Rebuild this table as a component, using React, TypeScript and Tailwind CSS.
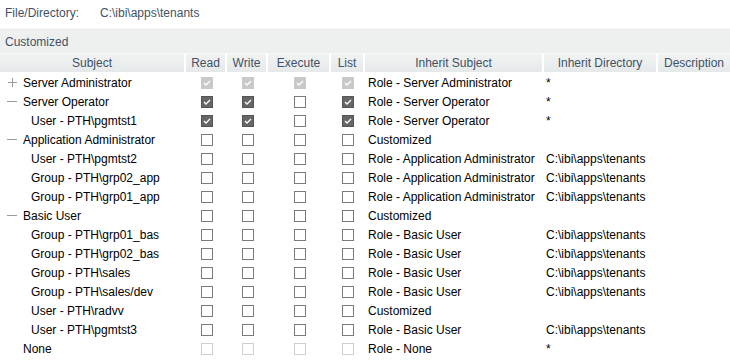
import React from "react";

type Box = "on" | "off" | "dis-on" | "dis-off";

interface Row {
  subject: string;
  level: 0 | 1;
  toggle?: "+" | "-";
  perms: [Box, Box, Box, Box];
  inherit: string;
  dir: string;
}

const off: [Box, Box, Box, Box] = ["off", "off", "off", "off"];

const rows: Row[] = [
  { subject: "Server Administrator", level: 0, toggle: "+", perms: ["dis-on", "dis-on", "dis-on", "dis-on"], inherit: "Role - Server Administrator", dir: "*" },
  { subject: "Server Operator", level: 0, toggle: "-", perms: ["on", "on", "off", "on"], inherit: "Role - Server Operator", dir: "*" },
  { subject: "User - PTH\\pgmtst1", level: 1, perms: ["on", "on", "off", "on"], inherit: "Role - Server Operator", dir: "*" },
  { subject: "Application Administrator", level: 0, toggle: "-", perms: off, inherit: "Customized", dir: "" },
  { subject: "User - PTH\\pgmtst2", level: 1, perms: off, inherit: "Role - Application Administrator", dir: "C:\\ibi\\apps\\tenants" },
  { subject: "Group - PTH\\grp02_app", level: 1, perms: off, inherit: "Role - Application Administrator", dir: "C:\\ibi\\apps\\tenants" },
  { subject: "Group - PTH\\grp01_app", level: 1, perms: off, inherit: "Role - Application Administrator", dir: "C:\\ibi\\apps\\tenants" },
  { subject: "Basic User", level: 0, toggle: "-", perms: off, inherit: "Customized", dir: "" },
  { subject: "Group - PTH\\grp01_bas", level: 1, perms: off, inherit: "Role - Basic User", dir: "C:\\ibi\\apps\\tenants" },
  { subject: "Group - PTH\\grp02_bas", level: 1, perms: off, inherit: "Role - Basic User", dir: "C:\\ibi\\apps\\tenants" },
  { subject: "Group - PTH\\sales", level: 1, perms: off, inherit: "Role - Basic User", dir: "C:\\ibi\\apps\\tenants" },
  { subject: "Group - PTH\\sales/dev", level: 1, perms: off, inherit: "Role - Basic User", dir: "C:\\ibi\\apps\\tenants" },
  { subject: "User - PTH\\radvv", level: 1, perms: off, inherit: "Customized", dir: "" },
  { subject: "User - PTH\\pgmtst3", level: 1, perms: off, inherit: "Role - Basic User", dir: "C:\\ibi\\apps\\tenants" },
  { subject: "None", level: 0, perms: ["dis-off", "dis-off", "dis-off", "dis-off"], inherit: "Role - None", dir: "*" },
];

// column widths taken from the header separators
const cols = "grid-cols-[186px_41px_41px_63px_34px_179px_114px_72px]";

function Check({ state }: { state: Box }) {
  const checked = state === "on" || state === "dis-on";
  const disabled = state.startsWith("dis");
  return (
    <div
      className={
        "size-[12px] border flex items-center justify-center " +
        (checked
          ? disabled
            ? "bg-[#c9c9c9] border-[#c9c9c9]"
            : "bg-[#666666] border-[#555555]"
          : disabled
          ? "bg-white border-[#cfcfcf]"
          : "bg-white border-[#7a7a7a]")
      }
    >
      {checked && (
        <svg width="10" height="10" viewBox="0 0 10 10">
          <path d="M2 5 L4 7 L8 3" stroke="white" strokeWidth="1.3" fill="none" />
        </svg>
      )}
    </div>
  );
}

function HeaderCell({ children, last }: { children: React.ReactNode; last?: boolean }) {
  return (
    <div
      className={
        "h-[18px] flex items-center justify-center bg-gradient-to-b from-[#f1f3f3] to-[#e6e9e9] text-[#3f5166] " +
        (last ? "" : "border-r-2 border-white")
      }
    >
      {children}
    </div>
  );
}

export default function App() {
  return (
    <div
      className="w-[730px] h-[363px] bg-white text-[12px] text-black overflow-hidden"
      style={{ fontFamily: '"Liberation Sans", Arial, sans-serif' }}
    >
      <div className="h-[28px] flex items-center text-[#3f5166] pl-[5px] pb-[3px]">
        <span className="w-[95px]">File/Directory:</span>
        <span>C:\ibi\apps\tenants</span>
      </div>
      <div className="h-[25px] bg-[#eef0f0] border-t border-[#f6f7f7] flex items-center pl-[5px] pt-[2px] text-[#3f5166]">
        Customized
      </div>
      <div className={"grid border-t border-[#f8f9f9] " + cols}>
        <HeaderCell>Subject</HeaderCell>
        <HeaderCell>Read</HeaderCell>
        <HeaderCell>Write</HeaderCell>
        <HeaderCell>Execute</HeaderCell>
        <HeaderCell>List</HeaderCell>
        <HeaderCell>Inherit Subject</HeaderCell>
        <HeaderCell>Inherit Directory</HeaderCell>
        <HeaderCell last>Description</HeaderCell>
      </div>
      <div className="pt-[1px]">
        {rows.map((r, i) => (
          <div key={i} className={"grid h-[19px] items-center " + cols}>
            <div className="flex items-center whitespace-nowrap">
              {r.level === 0 ? (
                <>
                  <span className="w-[23px] flex justify-center pl-[1px] text-[#9a9a9a]">
                    {r.toggle === "+" ? (
                      <span className="relative size-[9px]">
                        <span className="absolute left-0 top-[4px] w-[9px] h-px bg-[#9a9a9a]" />
                        <span className="absolute left-[4px] top-0 w-px h-[9px] bg-[#9a9a9a]" />
                      </span>
                    ) : r.toggle === "-" ? (
                      <span className="w-[10px] h-px bg-[#9a9a9a]" />
                    ) : null}
                  </span>
                  <span>{r.subject}</span>
                </>
              ) : (
                <span className="pl-[31px]">{r.subject}</span>
              )}
            </div>
            {r.perms.map((p, j) => (
              <div key={j} className="flex justify-center">
                <Check state={p} />
              </div>
            ))}
            <div className="pl-[3px] whitespace-nowrap">{r.inherit}</div>
            <div className="pl-[2px] whitespace-nowrap">{r.dir}</div>
            <div />
          </div>
        ))}
      </div>
    </div>
  );
}
